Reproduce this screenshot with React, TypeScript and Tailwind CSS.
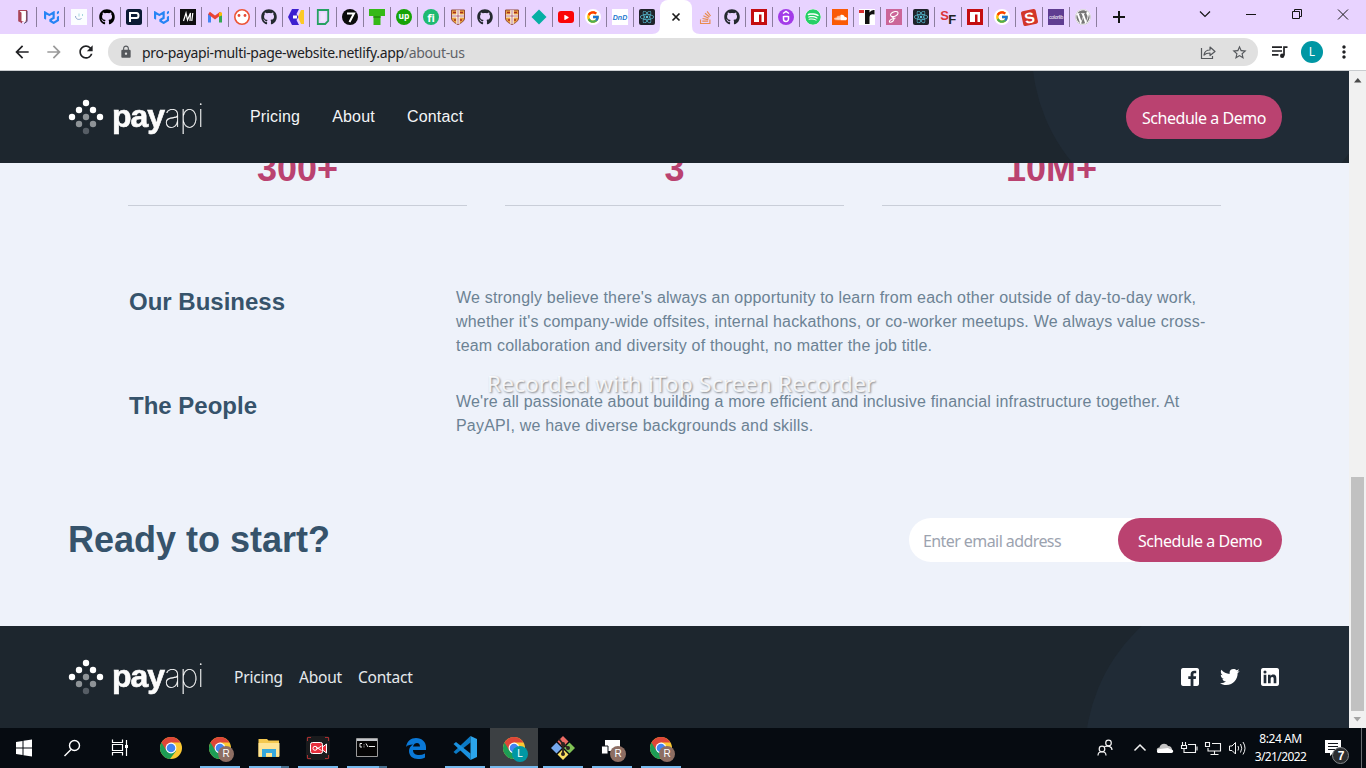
import React from "react";
import { FaGithub, FaReact, FaStackOverflow, FaSoundcloud, FaSass, FaWordpress, FaSpotify, FaPlay } from "react-icons/fa";
import { FcGoogle } from "react-icons/fc";
import { SiMui } from "react-icons/si";
import { MdArrowBack, MdArrowForward, MdRefresh, MdLock, MdMoreVert, MdStarBorder } from "react-icons/md";
import { BiLogoFacebookSquare, BiLogoTwitter, BiLogoLinkedinSquare } from "react-icons/bi";

type Kids = { children?: React.ReactNode };

const Svg = ({ children, s = 16 }: Kids & { s?: number }) => (
  <svg width={s} height={s} viewBox={`0 0 ${s} ${s}`} fill="none" className="block shrink-0">
    {children}
  </svg>
);

const Shield = () => (
  <Svg>
    <path d="M1.500 1h13v8c0 3-3 5-6.500 6.500C4.500 14 1.500 12 1.500 9z" fill="#e8a13f" stroke="#8f4a3a" />
    <path d="M8 1v14M2 7h12" stroke="#fff" strokeWidth="3.200" />
    <path d="M8 1v14M2 7h12" stroke="#a34a5a" strokeWidth="0.800" />
    <path d="M3 3.500h3M10 3.500h3M4 11h2M10 11h2" stroke="#a83020" strokeWidth="1.600" />
  </Svg>
);

const Npm = () => (
  <Svg>
    <path d="M0 0h16v16H0z" fill="#c40d10" />
    <path d="M3 3h10v10h-2.500V5.500H8V13H3z" fill="#fff" />
  </Svg>
);

const ReactTile = () => (
  <span className="flex size-4 items-center justify-center rounded-[2px] bg-[#20232a] text-[#5cc7de]">
    <FaReact size={14} />
  </span>
);

const Google = () => (
  <span className="flex size-4 items-center justify-center rounded-full bg-white">
    <FcGoogle size={14} />
  </span>
);

const leftTabs: React.ReactNode[] = [
  <Svg>
    <path d="M4 1.500h7.500v10.500H4z" fill="#fff" stroke="#a94457" strokeWidth="1.200" />
    <path d="M3.500 1.500L7 4v10.500L3.500 12z" fill="#a94457" />
    <path d="M6.500 3.500h4V12L8.500 14.500V12h-2z" fill="#fff" />
    <path d="M12 2v10.500L9 14.500" stroke="#54506f" />
  </Svg>,
  <SiMui size={15} className="text-[#2684f5]" />,
  <Svg>
    <path d="M0 0h16v16H0z" fill="#fbfdff" />
    <path d="M4.500 7c0 3 3 4.500 6 2.500" stroke="#91a6cf" />
    <path d="M8 4.500v3M11.500 5v2" stroke="#a5d5dd" />
  </Svg>,
  <FaGithub size={16} className="text-black" />,
  <Svg>
    <rect width="16" height="16" rx="2.500" fill="#0b1b34" />
    <path d="M4 13V4h6.500q2 0 2 2.500T10.500 9H4" stroke="#fff" strokeWidth="2" />
  </Svg>,
  <SiMui size={15} className="text-[#2684f5]" />,
  <Svg>
    <path d="M0 0h16v16H0z" fill="#0e0e10" />
    <path d="M3.500 12L6 4l1.500 7L10.500 4l-.5 8M12.800 4l-1 8" stroke="#fff" strokeWidth="1.200" />
  </Svg>,
  <Svg>
    <path d="M2.500 13.500V5" stroke="#4285f4" strokeWidth="3" />
    <path d="M13.500 13.500V5" stroke="#34a853" strokeWidth="3" />
    <path d="M2 4l6 4.500L14 4" stroke="#ea4335" strokeWidth="3" />
    <path d="M12 3.500h3v3l-3 1z" fill="#fbbc04" />
  </Svg>,
  <Svg>
    <circle cx="8" cy="8" r="7.200" fill="#fff" stroke="#ec5537" strokeWidth="1.600" />
    <circle cx="5" cy="6.500" r="1.400" fill="#e64a35" />
    <circle cx="11" cy="6.500" r="1.400" fill="#e64a35" />
  </Svg>,
  <FaGithub size={16} className="text-[#24292f]" />,
  <Svg>
    <path d="M4 0h7L8.500 5l2 3-2 3L11 16H4L0 8z" fill="#3c20cf" />
    <path d="M5 6.500h4v3H5z" fill="#fff" />
    <path d="M13 1h3v14h-3l-3-7z" fill="#fcc928" />
  </Svg>,
  <Svg>
    <path d="M2.800 1h10.400v11l-3 3H2.800z" stroke="#25a162" strokeWidth="1.800" />
    <path d="M5.500 3.500h5v9h-5z" fill="#f0e4ff" />
  </Svg>,
  <Svg>
    <circle cx="8" cy="8" r="8" fill="#0b0b0b" />
    <path d="M5 4.500h7L7.500 13" stroke="#fff" strokeWidth="2" />
  </Svg>,
  <Svg>
    <path d="M0 0h16v7h-4.500v9h-7V7H0z" fill="#35b918" />
    <path d="M4.500 7h7v2h-7z" fill="#269210" />
  </Svg>,
  <span className="flex size-4 items-center justify-center rounded-full bg-[#17a307] pb-px font-['Open_Sans',sans-serif] text-[8.500px] font-bold leading-none text-white">up</span>,
  <span className="flex size-4 items-center justify-center rounded-full bg-[#1fba72] font-['Open_Sans',sans-serif] text-[11px] font-bold leading-none text-white">fi</span>,
  <Shield />,
  <FaGithub size={16} className="text-[#24292f]" />,
  <Shield />,
  <Svg>
    <path d="M8 .5L15.500 8 8 15.500.5 8z" fill="#05afa4" />
  </Svg>,
  <span className="flex h-3 w-4 items-center justify-center rounded-[3px] bg-[#fb0606] text-white">
    <FaPlay size={5} />
  </span>,
  <Google />,
  <span className="flex size-4 items-center justify-center bg-white font-['Liberation_Sans',sans-serif] text-[7px] font-bold italic leading-none text-[#1d77cf]">DnD</span>,
  <ReactTile />,
];

const rightTabs: React.ReactNode[] = [
  <FaStackOverflow size={15} className="text-[#e98c4f]" />,
  <FaGithub size={16} className="text-[#24292f]" />,
  <Npm />,
  <Svg>
    <circle cx="8" cy="8" r="8" fill="#a33be8" />
    <path d="M5 4.500l3-2 3 2M5.500 7v3a2.500 2.500 0 005 0V7M5.500 7.500h5" stroke="#fff" strokeWidth="1.500" />
  </Svg>,
  <FaSpotify size={16} className="rounded-full bg-white text-[#26cf66]" />,
  <span className="flex size-4 items-center justify-center bg-[#fa5a05] text-white">
    <FaSoundcloud size={13} />
  </span>,
  <Svg>
    <path d="M0 0h16v16H0z" fill="#fff" />
    <path d="M0 1h5v3H0z" fill="#d93131" />
    <path d="M6 1h4.500v2.500Q12 .5 15.500 1v4.500q-5-1-5 3V15H6z" fill="#111" />
  </Svg>,
  <Svg>
    <path d="M0 0h16v16H0z" fill="#cb6698" />
    <path d="M5.500 7.500C3 5.500 6 3 9 2.500c4-.5 4 3 .5 4.500-2 1-4 .5-4 .5 3 1.500 3 3 1.500 4.500s-4 2-3.500 0c.5-1.500 4-2.500 6-3" stroke="#fff" strokeWidth="1.100" />
  </Svg>,
  <ReactTile />,
  <span className="flex size-4 items-start justify-center font-['Liberation_Sans',sans-serif] text-[13px] font-bold leading-none tracking-[-0.5px]">
    <span className="text-[#db3338]">S</span>
    <span className="mt-[4px] text-[#222]">F</span>
  </span>,
  <Npm />,
  <Google />,
  <span className="flex size-[15px] -rotate-12 items-center justify-center rounded-[2px] bg-[#d33529] font-['Liberation_Sans',sans-serif] text-[15px] font-bold leading-none text-white">S</span>,
  <span className="flex size-4 items-center justify-center bg-[#5f3d91] font-['Liberation_Sans',sans-serif] text-[5px] leading-none tracking-[-0.2px] text-white">colorlib</span>,
  <FaWordpress size={16} className="rounded-full bg-white text-[#777]" />,
];

const Tab = ({ children, look = "w-[27px]" }: Kids & { look?: string }) => (
  <div className={`flex h-5 shrink-0 items-center justify-end border-r border-[#8c7d9e] pr-[5px] ${look}`}>
    <span className="flex size-4 items-center justify-center">{children}</span>
  </div>
);

const TabStrip = () => (
  <div className="flex h-[34px] shrink-0 bg-[#e8d3ff]">
    <div className="flex items-center">
      {leftTabs.slice(0, 23).map((t, i) => (
        <Tab key={i} look={i === 0 ? "w-[37px]" : i < 4 ? "w-[28px]" : "w-[27px]"}>
          {t}
        </Tab>
      ))}
      <div className="flex w-[26px] justify-center pr-px">{leftTabs[23]}</div>
    </div>
    <div className="relative flex h-[34px] w-[32px] items-center justify-center rounded-t-lg bg-white">
      <svg width="48" height="8" viewBox="0 0 48 8" className="absolute -left-2 bottom-0">
        <path d="M0 8h8V0q0 8-8 8zM48 8h-8V0q0 8 8 8z" fill="#fff" />
      </svg>
      <Svg s={10}>
        <path d="M1.500 1.500l7 7M8.500 1.500l-7 7" stroke="#1b1b1b" strokeWidth="1.700" />
      </Svg>
    </div>
    <div className="flex items-center">
      {rightTabs.map((t, i) => (
        <Tab key={i}>{t}</Tab>
      ))}
    </div>
    <svg width="269" height="34" viewBox="1 0 269 34" fill="none" stroke="#151515">
      <path d="M23 11v12M17 17h12" strokeWidth="2" />
      <path d="M104 11.500l5 5 5-5" strokeWidth="1.200" />
      <path d="M150 14.500h10" />
      <path d="M196.500 11.500h7v7h-7zM198.500 11.500v-2h7v7h-2" />
      <path d="M242 9.500l10 10M252 9.500l-10 10" />
    </svg>
  </div>
);

const Toolbar = () => (
  <div className="flex h-[37px] shrink-0 items-center border-b border-[#c9cccf] bg-white text-[#202124]">
    <div className="flex w-[108px] items-center gap-[12px] pl-[12px]">
      <MdArrowBack size={20} />
      <MdArrowForward size={20} className="text-[#9a9a9a]" />
      <MdRefresh size={20} />
    </div>
    <div className="flex h-7 w-[1150px] items-center rounded-full bg-[#e0e0e0] pl-[11px] pr-[10px]">
      <MdLock size={14} className="text-[#55585c]" />
      <span className="ml-[9px] whitespace-pre font-['Noto_Sans','Open_Sans',sans-serif] text-[14px] tracking-[-0.32px]">
        pro-payapi-multi-page-website.netlify.app<span className="text-[#5f6368]">/about-us</span>
      </span>
      <div className="ml-auto flex items-center gap-[15px] text-[#55585c]">
        <svg width="16" height="16" viewBox="0 0 16 16" fill="none" stroke="currentColor" strokeWidth="1.200">
          <path d="M1.500 4v10.500h11V12" />
          <path d="M4 11c.5-3.500 3-5 6-5V3l5 4.500-5 4V9C7.500 9 5.500 9.500 4 11z" strokeLinejoin="round" />
        </svg>
        <MdStarBorder size={17} />
      </div>
    </div>
    <svg width="18" height="16" viewBox="0 0 18 16" fill="none" stroke="currentColor" strokeWidth="1.700" className="ml-[13px]">
      <path d="M1 3.200h10M1 7h10M1 10.800h6.500M13 11.500V3.200h3.500" />
      <circle cx="11.200" cy="11.800" r="2.200" fill="currentColor" stroke="none" />
    </svg>
    <span className="ml-[12px] flex size-[22px] items-center justify-center rounded-full bg-[#0097a4] font-['Noto_Sans',sans-serif] text-[12px] text-white">L</span>
    <MdMoreVert size={20} className="ml-[11px]" />
  </div>
);

const dots: [number, number, string][] = [
  [18, 7, "#fff"], [11, 14, "#fff"], [25, 14, "#fff"], [4, 21, "#fff"], [32, 21, "#fff"],
  [18, 21, "#8e9397"], [11, 28, "#8e9397"], [25, 28, "#8e9397"], [18, 35, "#565d65"],
];

const Logo = () => (
  <div className="flex h-[42px] w-[135px] items-center">
    <svg width="36" height="42" viewBox="0 0 36 42" className="shrink-0">
      {dots.map(([x, y, c]) => (
        <circle key={`${x}-${y}`} cx={x} cy={y} r="3.200" fill={c} />
      ))}
    </svg>
    <span className="mb-[3px] ml-[8px] flex items-baseline leading-[42px] text-white opacity-[0.99] will-change-transform">
      <span className="font-['Liberation_Sans',sans-serif] text-[32px] font-bold tracking-[-1px] [-webkit-text-stroke:0.6px_white]">pay</span>
      <span className="font-['Inter',sans-serif] text-[32px] font-thin tracking-[-1.100px] [-webkit-text-stroke:0.2px_white]">api</span>
    </span>
  </div>
);

const PillButton = ({ wide }: { wide: string }) => (
  <button className={`flex h-11 shrink-0 items-center justify-center rounded-full bg-[#ba4270] pt-px font-['Noto_Sans','Open_Sans',sans-serif] text-[16px] tracking-[-0.46px] text-white ${wide}`}>
    Schedule a Demo
  </button>
);

const Header = () => (
  <header className="relative flex h-[92px] shrink-0 items-center overflow-hidden bg-[#1d262e] pl-[68px] pr-[67px]">
    <svg width="360" height="92" viewBox="0 0 360 92" className="absolute right-0 top-0">
      <circle cx="218" cy="-20" r="175" fill="#202b36" />
    </svg>
    <Logo />
    <nav className="relative ml-[47px] flex gap-8 font-['Liberation_Sans',sans-serif] text-[16px] tracking-[0.18px] text-[#f3f5f7]">
      <a>Pricing</a>
      <a>About</a>
      <a>Contact</a>
    </nav>
    <div className="relative ml-auto">
      <PillButton wide="w-[156px]" />
    </div>
  </header>
);

const Row = ({ title, children, top }: Kids & { title: string; top: string }) => (
  <section className={`flex pl-[129px] font-['Liberation_Sans',sans-serif] ${top}`}>
    <h3 className="w-[327px] shrink-0 text-[24px] font-bold leading-8 text-[#36536b]">{title}</h3>
    <p className="w-[765px] text-[16px] leading-6 tracking-[0.185px] text-[#6c8294]">{children}</p>
  </section>
);

const Main = () => (
  <main className="flex h-[463px] shrink-0 flex-col overflow-hidden bg-[#eef2fa]">
    <div className="-mt-[15px] grid h-[58px] shrink-0 grid-cols-3 gap-[38px] pl-[128px] pr-[128px]">
      {["300+", "3", "10M+"].map((n) => (
        <div key={n} className="border-b border-[#c9ced8] pt-px text-center font-['Liberation_Sans',sans-serif] text-[36px] font-bold leading-10 text-[#ba4270]">
          {n}
        </div>
      ))}
    </div>
    <Row title="Our Business" top="mt-[80px]">
      We strongly believe there's always an opportunity to learn from each other outside of day-to-day work, whether it's company-wide offsites, internal hackathons, or co-worker meetups. We always value cross-team collaboration and diversity of thought, no matter the job title.
    </Row>
    <Row title="The People" top="mt-8">
      We're all passionate about building a more efficient and inclusive financial infrastructure together. At PayAPI, we have diverse backgrounds and skills.
    </Row>
    <section className="mt-[80px] flex h-11 shrink-0 items-center justify-between pl-[68px] pr-[67px]">
      <h2 className="font-['Liberation_Sans',sans-serif] text-[36px] font-bold leading-10 text-[#36536b]">Ready to start?</h2>
      <div className="flex h-11 w-[373px] items-center justify-between rounded-full bg-white pl-[14px]">
        <span className="pt-px font-['Noto_Sans','Open_Sans',sans-serif] text-[16px] tracking-[-0.58px] text-[#9ca3af]">Enter email address</span>
        <PillButton wide="w-[164px]" />
      </div>
    </section>
  </main>
);

const Footer = () => (
  <footer className="relative flex h-[102px] shrink-0 items-center overflow-hidden bg-[#1d262e] pl-[68px] pr-[67px]">
    <svg width="300" height="102" viewBox="0 0 300 102" className="absolute right-0 top-0">
      <circle cx="211" cy="129" r="175" fill="#202b36" />
    </svg>
    <Logo />
    <nav className="relative ml-[31px] flex gap-4 pt-[2px] font-['Noto_Sans','Open_Sans',sans-serif] text-[15.500px] tracking-[-0.2px] text-[#e6eaed]">
      <a>Pricing</a>
      <a>About</a>
      <a>Contact</a>
    </nav>
    <div className="relative ml-auto flex gap-4 text-white">
      <BiLogoFacebookSquare size={24} className="[clip-path:inset(3px_round_2px)]" />
      <BiLogoTwitter size={24} />
      <BiLogoLinkedinSquare size={24} className="[clip-path:inset(3px_round_2px)]" />
    </div>
  </footer>
);

const Scrollbar = () => (
  <div className="flex w-[17px] shrink-0 flex-col items-center bg-[#f1f1f1]">
    <svg width="17" height="17" viewBox="0 0 17 17">
      <path d="M5 11.500h7.500l-3.700-4.500z" fill="#4b4b4b" />
    </svg>
    <div className="mt-[389px] h-[234px] w-[13px] bg-[#c1c1c1]" />
    <svg width="17" height="17" viewBox="0 0 17 17">
      <path d="M4.500 6h7.500l-3.700 4.500z" fill="#a3a3a3" />
    </svg>
  </div>
);

const Badge = ({ children, tone = "#8d6e63" }: Kids & { tone?: string }) => (
  <span
    className="absolute left-[9px] top-[9px] flex size-4 items-center justify-center rounded-full font-['Liberation_Sans',sans-serif] text-[10px] leading-none text-white"
    style={{ backgroundColor: tone }}
  >
    {children}
  </span>
);

const Chrome = ({ badge, tone = "#8d6e63" }: { badge?: string; tone?: string }) => (
  <span className="relative block size-[22px]">
    <svg width="22" height="22" viewBox="0 0 22 22">
      <circle cx="11" cy="11" r="11" fill="#fbc832" />
      <path d="M11 11L1.500 5.500A11 11 0 0 0 10 22l6-8z" fill="#1d9d55" />
      <path d="M1.500 5.500A11 11 0 0 1 20.500 5.500H11L6 13z" fill="#de4638" />
      <circle cx="11" cy="11" r="5.400" fill="#fff" />
      <circle cx="11" cy="11" r="4.300" fill="#4384f3" />
    </svg>
    {badge && <Badge tone={tone}>{badge}</Badge>}
  </span>
);

const apps: { icon: React.ReactNode; bar?: "full" | "split" | "active" }[] = [
  { icon: <Chrome /> },
  { icon: <Chrome badge="R" />, bar: "full" },
  {
    icon: (
      <Svg s={22}>
        <path d="M.5 2h8.500l1.500 1.500H21V20H.5z" fill="#f4c84f" />
        <path d="M.5 6h21v13.500H.5z" fill="#ffe596" />
        <path d="M4 20v-8h14v8h-4v-4H8v4z" fill="#36a8dc" />
      </Svg>
    ),
    bar: "split",
  },
  {
    icon: (
      <Svg s={24}>
        <rect width="24" height="24" rx="4" fill="#1a1b1d" />
        <path d="M1.500 5V1.500H5M19 1.500h3.500V5M1.500 19v3.500H5M19 22.500h3.500V19" stroke="#a82d30" />
        <rect x="4.500" y="6.500" width="12" height="11" rx="2" fill="#e8303d" stroke="#fff" />
        <path d="M16.500 11l4-3v9l-4-3z" fill="#e8303d" stroke="#fff" />
        <path d="M15.500 10L10 13.500M15.500 14.500L10 11" stroke="#fff" />
        <circle cx="9" cy="12.300" r="2" stroke="#fff" />
      </Svg>
    ),
    bar: "full",
  },
  {
    icon: (
      <Svg s={22}>
        <path d="M.5 1.500h21v18H.5z" fill="#050505" stroke="#9b9b9b" />
        <path d="M1 2h20v2H1z" fill="#c3c7cb" />
        <path d="M6 6.500H4v3.500h2M8 7.500v.8M8 9.500v.8M10 6.500l2 3.500M13 9.500h6" stroke="#eee" />
      </Svg>
    ),
    bar: "split",
  },
  {
    icon: (
      <Svg s={22}>
        <path d="M1 10C2 4 6 1 11 1c6 0 10 4 10 9v3H8c0 4 3 5 6 5 2 0 4-.5 6-1.500v4c-2 1-4 1.500-7 1.500-5 0-9-3-9-8 0-3 1.500-5 4-6.500C4.500 8 2.500 8 1 10zm7-.500h7C15 7 13.500 6 12 6S8.500 7 8 9.500z" fill="#0a78d6" fillRule="evenodd" />
      </Svg>
    ),
  },
  {
    icon: (
      <Svg s={24}>
        <path d="M17.500 0v6.500L3 18l-2.500-2L17.500 0z" fill="#0b7ac5" />
        <path d="M17.500 24v-6.500L3 6 .5 8l17 16z" fill="#1a91df" />
        <path d="M17.500 0L24 3v18l-6.500 3z" fill="#2ba5ec" />
      </Svg>
    ),
    bar: "full",
  },
  { icon: <Chrome badge="L" tone="#0097a4" />, bar: "active" },
  {
    icon: (
      <Svg s={24}>
        <path d="M12 0l5.500 5.500-5.500 5.500-5.500-5.500z" fill="#ec6b64" />
        <path d="M18.500 6.500L24 12l-5.500 5.500L13 12z" fill="#80c355" />
        <path d="M5.500 6.500L11 12l-5.500 5.500L0 12z" fill="#76a9ee" />
        <path d="M12 13l5.500 5.500L12 24l-5.500-5.500z" fill="#fadf62" />
        <path d="M8 3l4 5v11M12 8l5 4" stroke="#2d2420" strokeWidth="1.800" />
        <circle cx="12" cy="8" r="2" fill="#2d2420" />
        <circle cx="17" cy="12" r="2" fill="#2d2420" />
        <circle cx="12" cy="18" r="2" fill="#2d2420" />
      </Svg>
    ),
    bar: "full",
  },
  {
    icon: (
      <span className="relative block size-[22px]">
        <Svg s={22}>
          <path d="M4 3h15v11H4z" fill="#fff" />
          <path d="M.5 9h6.500v8H.5z" fill="#fff" stroke="#11151a" />
        </Svg>
        <Badge>R</Badge>
      </span>
    ),
    bar: "full",
  },
  { icon: <Chrome badge="R" />, bar: "full" },
];

const AppCell = ({ icon, bar }: { icon: React.ReactNode; bar?: string }) => (
  <div className="h-10 w-[49px] shrink-0">
    <div className={`flex h-10 w-12 flex-col items-center ${bar === "active" ? "bg-[#3c4043]" : ""}`}>
      <div className="flex h-[38px] items-center justify-center pt-[2px]">{icon}</div>
      {bar === "full" && <div className="h-[2px] w-10 bg-[#76b9ed]" />}
      {bar === "active" && <div className="h-[2px] w-12 bg-[#76b9ed]" />}
      {bar === "split" && (
        <div className="flex h-[2px] w-10">
          <div className="w-8 bg-[#76b9ed]" />
          <div className="w-2 bg-[#47708f]" />
        </div>
      )}
    </div>
  </div>
);

const Taskbar = () => (
  <div className="flex h-10 shrink-0 bg-[#060b11]">
    <svg width="147" height="40" viewBox="0 0 147 40" fill="none">
      <path d="M16 14l6.500-1v6.500H16zM23.500 12.800L32 11.500v8h-8.500zM16 20.500h6.500V27L16 26zM23.500 20.500H32v8l-8.500-1.300z" fill="#fff" />
      <circle cx="74.500" cy="17.500" r="5" stroke="#fff" strokeWidth="1.400" />
      <path d="M71 21.500L64.500 28" stroke="#fff" strokeWidth="1.500" />
      <path d="M112.500 11.500v3h10v-3M112.500 27.500v-3h10v3M112.500 16.500h10v6h-10zM126.500 12v16" stroke="#fff" strokeWidth="1.200" />
      <path d="M125 17h3v3h-3z" fill="#fff" />
    </svg>
    {apps.map((a, i) => (
      <AppCell key={i} icon={a.icon} bar={a.bar} />
    ))}
    <svg width="162" height="40" viewBox="0 0 162 40" fill="none" stroke="#f2f2f2" strokeWidth="1.200" className="ml-auto">
      <circle cx="24.500" cy="15" r="2.800" />
      <circle cx="18" cy="21" r="2.800" />
      <path d="M14 27.500c0-5 8-5 8 0M20.500 18.500c3-1 7.500-.5 7.500 3.500" />
      <path d="M50.500 22.500l5.500-5.500 5.500 5.500" strokeWidth="1.500" />
      <path d="M75 23.500c-3 0-3-4 .5-4 .5-4.500 7-5 8.500-1.500 3 0 4 2 4 4z" fill="#c4c4c4" stroke="none" />
      <path d="M74 25c-2-1-1-4 2-4l8-1c1 .5 2 1.500 3.500 1.500 2.500.5 2 3.500 0 3.500z" fill="#fff" stroke="none" />
      <path d="M97.500 17.500v3h5v-3zM98.500 17v-3M101.500 17v-3M100 20.500v4h11.500v-8H104M113 18.500v4" strokeWidth="1.100" />
      <path d="M121.500 14.500v4h4v-4zM128 15.500h8.500v7.500h-12.500v-3M130.500 23v3M126.500 26.500h8" strokeWidth="1.100" />
      <path d="M145.500 18h2.500l3.500-3.500v11.500l-3.500-3.500h-2.500zM154 18q1.300 2 0 4.500M156.500 16q2.500 4.200 0 8.500M159 14q4 6.200 0 12.500" strokeWidth="1" />
    </svg>
    <div className="flex w-[68px] flex-col items-center pl-px pt-[2px] font-['Noto_Sans','Open_Sans',sans-serif] text-[12px] leading-[18px] tracking-[-0.45px] text-white">
      <span>8:24 AM</span>
      <span className="tracking-[-0.6px]">3/21/2022</span>
    </div>
    <div className="relative w-[52px]">
      <svg width="52" height="40" viewBox="0 0 52 40" fill="none">
        <path d="M11 12h16v13h-8l-3 3v-3h-5z" fill="#fff" />
        <path d="M14 15.500h10M14 18.500h10M14 21.500h7" stroke="#11151b" />
        <circle cx="26.500" cy="27.500" r="8" fill="#2b2d30" stroke="#85888b" />
        <path d="M47.500 0v40" stroke="#686c70" />
      </svg>
      <span className="absolute left-[19px] top-[20px] w-4 text-center font-['Liberation_Sans',sans-serif] text-[12px] font-bold leading-4 text-white">7</span>
    </div>
  </div>
);

export default function App() {
  return (
    <div className="relative flex h-[768px] w-[1366px] flex-col overflow-hidden">
      <TabStrip />
      <Toolbar />
      <div className="flex h-[657px] shrink-0">
        <div className="flex w-[1349px] flex-col">
          <Header />
          <Main />
          <Footer />
        </div>
        <Scrollbar />
      </div>
      <Taskbar />
      <div className="absolute left-[487px] top-[368px] whitespace-nowrap font-['Noto_Sans','Open_Sans',sans-serif] text-[22.500px] leading-8 tracking-[0.24px] text-white/85 [text-shadow:1px_1px_2px_rgba(0,0,0,0.45)]">
        Recorded with iTop Screen Recorder
      </div>
    </div>
  );
}
